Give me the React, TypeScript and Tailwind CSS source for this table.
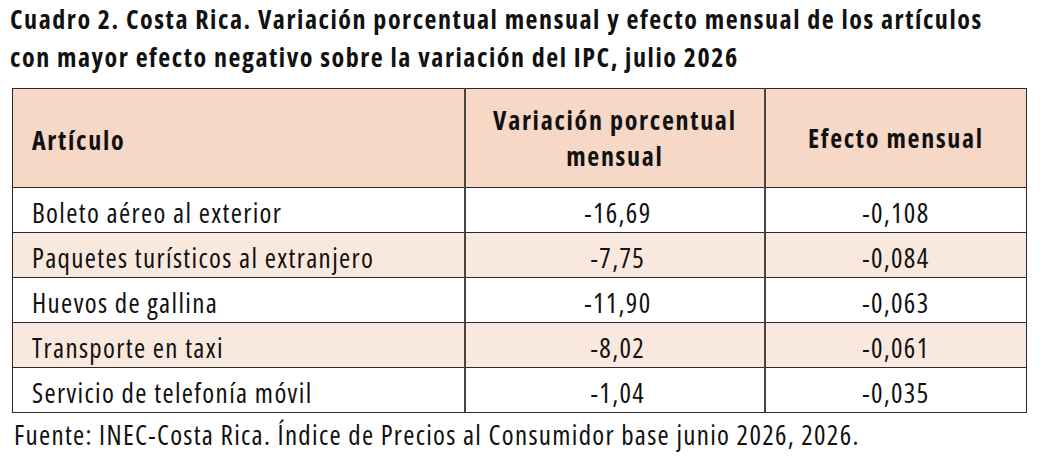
const rows = [
  { articulo: "Boleto aéreo al exterior", variacion: "-16,69", efecto: "-0,108" },
  { articulo: "Paquetes turísticos al extranjero", variacion: "-7,75", efecto: "-0,084" },
  { articulo: "Huevos de gallina", variacion: "-11,90", efecto: "-0,063" },
  { articulo: "Transporte en taxi", variacion: "-8,02", efecto: "-0,061" },
  { articulo: "Servicio de telefonía móvil", variacion: "-1,04", efecto: "-0,035" },
]

export default function App() {
  return (
    <div className="w-[1042px] h-[471px] bg-white text-[#111] font-['Open_Sans',sans-serif] font-stretch-condensed">
      {/* Title */}
      <h1 className="pl-[10px] text-[26px] leading-[38px] font-bold tracking-[1.55px]">
        Cuadro 2. Costa Rica. Variación porcentual mensual y efecto mensual de los artículos
        <br />
        con mayor efecto negativo sobre la variación del IPC, julio 2026
      </h1>

      {/* Table */}
      <table className="ml-[12px] mt-[12px] w-[1015px] border-collapse text-[27px] tracking-[1.35px]">
        <colgroup>
          <col className="w-[453px]" />
          <col className="w-[300px]" />
          <col className="w-[262px]" />
        </colgroup>
        <thead>
          <tr className="h-[99px] bg-[#f7d7c6] text-[26px] font-bold tracking-[1.7px]">
            <th className="border border-[#2a2a2a] pl-[19px] pt-[4px] text-left leading-[36px]">Artículo</th>
            <th className="border border-[#2a2a2a] border-l-2 border-l-[#4a4440] text-center leading-[36px]">
              Variación porcentual
              <br />
              mensual
            </th>
            <th className="border border-[#2a2a2a] border-l-2 border-l-[#4a4440] text-center leading-[36px]">Efecto mensual</th>
          </tr>
        </thead>
        <tbody>
          {rows.map((r, i) => (
            <tr key={r.articulo} className={i % 2 === 1 ? "h-[45px] bg-[#f9e8de]" : "h-[45px] bg-white"}>
              <td className="border border-[#2a2a2a] pl-[19px] pt-[5px] leading-[34px]">{r.articulo}</td>
              <td className="border border-[#2a2a2a] border-l-2 border-l-[#4a4440] pt-[5px] text-center leading-[34px]">
                <span className="pl-[6px]">{r.variacion}</span>
              </td>
              <td className="border border-[#2a2a2a] border-l-2 border-l-[#4a4440] pt-[5px] text-center leading-[34px]">{r.efecto}</td>
            </tr>
          ))}
        </tbody>
      </table>

      {/* Source */}
      <p className="pl-[14px] mt-[3px] text-[27px] leading-[38px] tracking-[1.3px]">
        Fuente: INEC-Costa Rica. Índice de Precios al Consumidor base junio 2026, 2026.
      </p>
    </div>
  )
}
